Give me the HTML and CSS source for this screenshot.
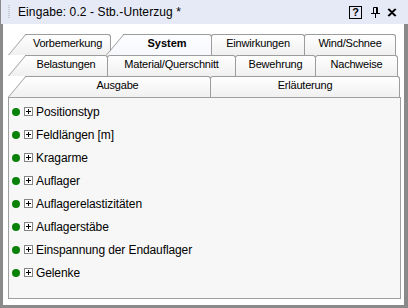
FILE: index.html
```html
<!DOCTYPE html>
<html lang="de">
<head>
<meta charset="UTF-8">
<title>Eingabe: 0.2 - Stb.-Unterzug</title>
<link rel="stylesheet" href="styles.css">
</head>
<body>
<div class="window">
  <div class="titlebar">
    <span class="grip"></span>
    <span class="title">Eingabe: 0.2 - Stb.-Unterzug *</span>
    <span class="tb-help">?</span>
    <svg class="tb-pin" width="9" height="11" viewBox="0 0 9 11"><path d="M2.5 0.5h4v6h-4z M0 6.5h9 M4.5 7v4" fill="none" stroke="#000" stroke-width="1"/><path d="M5.5 1v5" stroke="#000"/></svg>
    <svg class="tb-close" width="10" height="9" viewBox="0 0 10 9"><path d="M1 1l7 7 M8 1l-7 7 M2 1l7 7 M9 1l-7 7" stroke="#000" stroke-width="1.2"/></svg>
  </div>
  <div class="body">
    <div class="tabrow">
      <div class="tab slant t-vorb">Vorbemerkung</div>
      <div class="tab slant active t-sys">System</div>
      <div class="tab t-einw">Einwirkungen</div>
      <div class="tab last">Wind/Schnee</div>
    </div>
    <div class="tabrow r2">
      <div class="tab slant t-bel">Belastungen</div>
      <div class="tab t-mat">Material/Querschnitt</div>
      <div class="tab t-bew">Bewehrung</div>
      <div class="tab last">Nachweise</div>
    </div>
    <div class="tabrow r3">
      <div class="tab slant t-aus">Ausgabe</div>
      <div class="tab last">Erläuterung</div>
    </div>
    <div class="panel">
      <ul class="tree">
        <li><span class="dot"></span><span class="plus"></span>Positionstyp</li>
        <li><span class="dot"></span><span class="plus"></span>Feldlängen [m]</li>
        <li><span class="dot"></span><span class="plus"></span>Kragarme</li>
        <li><span class="dot"></span><span class="plus"></span>Auflager</li>
        <li><span class="dot"></span><span class="plus"></span>Auflagerelastizitäten</li>
        <li><span class="dot"></span><span class="plus"></span>Auflagerstäbe</li>
        <li><span class="dot"></span><span class="plus"></span>Einspannung der Endauflager</li>
        <li><span class="dot"></span><span class="plus"></span>Gelenke</li>
      </ul>
    </div>
  </div>
</div>
</body>
</html>
```

FILE: styles.css
```css
* { box-sizing: border-box; }
html, body { margin: 0; padding: 0; }
body { width: 408px; height: 308px; overflow: hidden; background: #8a8a8a; font-family: "Liberation Sans", Arial, sans-serif; color: #000; }

.window { width: 408px; height: 308px; display: flex; flex-direction: column; }

.titlebar { height: 24px; display: flex; align-items: center; background: #e6eaf6; border-left: 1px solid #8a8a8a; }
.grip { width: 2px; height: 14px; margin-left: 7px; background: repeating-linear-gradient(#c4c8d4 0 1px, transparent 1px 2px); }
.title { margin-left: 8px; font-size: 12px; letter-spacing: 0.1px; flex: 1; }
.tb-help { width: 13px; height: 13px; border: 1px solid #000; font-size: 11px; font-weight: bold; line-height: 11px; text-align: center; }
.tb-pin { margin-left: 9px; }
.tb-close { margin-left: 7px; margin-right: 11px; }

.body { flex: 1; background: #fff; margin: 0 4px 3px 3px; padding: 10px 3px 6px 5px; display: flex; flex-direction: column; }

.tabrow { display: flex; height: 21px; font-size: 11px; letter-spacing: -0.2px; padding-right: 5px; }
.tabrow.r2 { padding-right: 3px; }
.tabrow.r3 { padding-right: 1px; }

.tab { position: relative; z-index: 1; flex: none; height: 21px; line-height: 17px; text-align: center; border: 1px solid #9c9c9c; border-bottom: 0; border-radius: 3px 3px 0 0; background: linear-gradient(#ffffff, #f0f0f0); margin-left: -1px; }
.tab.slant { border-left: 0; border-top-left-radius: 0; margin-left: 17px; }
.tab.slant::before { content: ""; position: absolute; z-index: -1; left: -17px; top: -1px; bottom: 0; width: 28px; border-left: 1px solid #9c9c9c; border-top: 1px solid #9c9c9c; background: inherit; transform: skewX(-40deg); transform-origin: 0 100%; }
.tab.active { z-index: 3; margin-left: 12px; font-weight: bold; letter-spacing: 0; background: linear-gradient(#fcfdff, #f6f8fc); }
.tab.last { flex: 1; }

.t-vorb { width: 86px; }
.t-sys { width: 89px; }
.t-einw { width: 94px; }
.t-bel { width: 83px; }
.t-mat { width: 129px; }
.t-bew { width: 81px; }
.t-aus { width: 186px; }

.panel { flex: 1; background: #f7f7f7; border: 1px solid #a0a0a0; }
.tree { list-style: none; margin: 0; padding: 2px 0 0 3px; }
.tree li { height: 23px; display: flex; align-items: center; font-size: 12px; letter-spacing: -0.1px; }
.dot { width: 8px; height: 8px; border-radius: 50%; background: #0a820a; margin-right: 4px; }
.plus { position: relative; width: 9px; height: 9px; border: 1px solid #848484; background: #fff; margin-right: 3px; }
.plus::before { content: ""; position: absolute; left: 1px; top: 3px; width: 5px; height: 1px; background: #000; }
.plus::after { content: ""; position: absolute; left: 3px; top: 1px; width: 1px; height: 5px; background: #000; }
```
